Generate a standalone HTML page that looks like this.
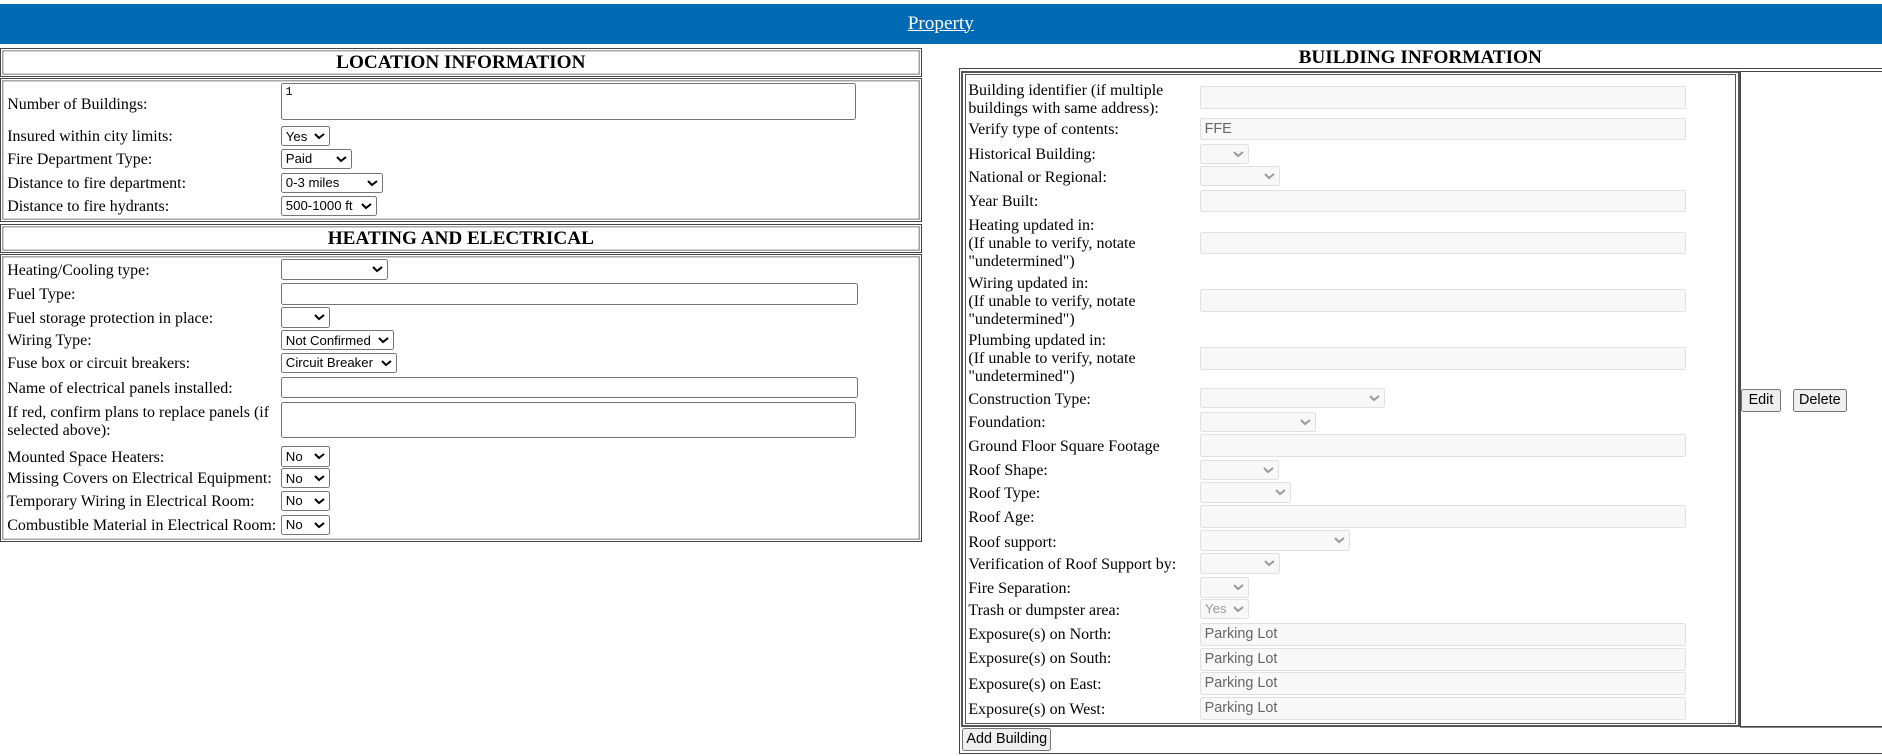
<!DOCTYPE html>
<html><head><meta charset="utf-8">
<style>
html,body{margin:0;padding:0;background:#fff;overflow:hidden}
body{zoom:1.2;width:1568px;height:630px;position:relative;font-family:"Liberation Serif",serif;font-size:13.33px;color:#000}
.a{position:absolute}
.bar{left:0;top:3px;width:1568px;height:34px;background:#0069b4;text-align:center;line-height:34px;font-size:16px}
.bar a{color:#fff;text-decoration:underline}
.box{position:absolute;border:1px solid #444;box-shadow:inset 0 0 0 1px #fff,inset 0 0 0 2px #888;box-sizing:border-box}
.h{font-weight:bold;font-size:16px;text-align:center}
.lb{position:absolute;line-height:15px;margin-top:1px}
select{position:absolute;height:17px;font-family:"Liberation Sans",sans-serif;font-size:11px;border:1px solid #767676;border-radius:2px;background:#fff;padding:0;color:#000;box-sizing:border-box}
select.d{border-color:#e0e0e0;color:#999;background:#f8f8f8}
.in{position:absolute;border:1px solid #767676;border-radius:2px;box-sizing:border-box;height:18px;font-family:"Liberation Sans",sans-serif;font-size:12px;padding-left:3px;line-height:16px}
.di{position:absolute;border:1px solid #e0e0e0;background:#f8f8f8;border-radius:2px;box-sizing:border-box;height:19px;font-family:"Liberation Sans",sans-serif;font-size:12px;padding-left:3px;line-height:17px;color:#666;left:1000px;width:405px}
.btn{position:absolute;border:1px solid #767676;background:#efefef;border-radius:2px;font-family:"Liberation Sans",sans-serif;font-size:12px;text-align:center;line-height:17px;height:19px;box-sizing:border-box}
</style></head><body>
<div class="a bar"><a>Property</a></div>

<!-- LEFT -->
<div class="box" style="left:0;top:40px;width:768px;height:24px"></div>
<div class="a h" style="left:0;top:43px;width:768px">LOCATION INFORMATION</div>
<div class="box" style="left:0;top:65px;width:768px;height:120px"></div>
<div class="lb" style="left:6px;top:79px">Number of Buildings:</div>
<div class="in" style="left:234px;top:69px;width:479px;height:31px;font-family:'Liberation Mono',monospace;font-size:10px;line-height:14px">1</div>
<div class="lb" style="left:6px;top:106px">Insured within city limits:</div><select style="left:234px;top:105px;width:41px"><option>Yes</option></select>
<div class="lb" style="left:6px;top:125px">Fire Department Type:</div><select style="left:234px;top:124px;width:59px"><option>Paid</option></select>
<div class="lb" style="left:6px;top:145px">Distance to fire department:</div><select style="left:234px;top:144px;width:85px"><option>0-3 miles</option></select>
<div class="lb" style="left:6px;top:164px">Distance to fire hydrants:</div><select style="left:234px;top:163px;width:80px"><option>500-1000 ft</option></select>

<div class="box" style="left:0;top:187px;width:768px;height:24px"></div>
<div class="a h" style="left:0;top:190px;width:768px">HEATING AND ELECTRICAL</div>
<div class="box" style="left:0;top:212px;width:768px;height:240px"></div>
<div class="lb" style="left:6px;top:217px">Heating/Cooling type:</div><select style="left:234px;top:216px;width:89px"></select>
<div class="lb" style="left:6px;top:237px">Fuel Type:</div><div class="in" style="left:234px;top:236px;width:481px"></div>
<div class="lb" style="left:6px;top:257px">Fuel storage protection in place:</div><select style="left:234px;top:256px;width:41px"></select>
<div class="lb" style="left:6px;top:276px">Wiring Type:</div><select style="left:234px;top:275px;width:94px"><option>Not Confirmed</option></select>
<div class="lb" style="left:6px;top:295px">Fuse box or circuit breakers:</div><select style="left:234px;top:294px;width:97px"><option>Circuit Breaker</option></select>
<div class="lb" style="left:6px;top:316px">Name of electrical panels installed:</div><div class="in" style="left:234px;top:314px;width:481px"></div>
<div class="lb" style="left:6px;top:336px;width:225px">If red, confirm plans to replace panels (if selected above):</div><div class="in" style="left:234px;top:335px;width:479px;height:30px"></div>
<div class="lb" style="left:6px;top:373px">Mounted Space Heaters:</div><select style="left:234px;top:372px;width:41px"><option>No</option></select>
<div class="lb" style="left:6px;top:391px">Missing Covers on Electrical Equipment:</div><select style="left:234px;top:390px;width:41px"><option>No</option></select>
<div class="lb" style="left:6px;top:410px">Temporary Wiring in Electrical Room:</div><select style="left:234px;top:409px;width:41px"><option>No</option></select>
<div class="lb" style="left:6px;top:430px">Combustible Material in Electrical Room:</div><select style="left:234px;top:429px;width:41px"><option>No</option></select>

<!-- RIGHT -->
<div class="a h" style="left:799px;top:39px;width:769px">BUILDING INFORMATION</div>
<div class="a" style="left:799px;top:57px;width:769px;height:571px;border:1px solid #444;border-right:none;box-sizing:border-box"></div>
<div class="a" style="left:801px;top:59px;width:649px;height:547px;border:2px solid #555;box-sizing:border-box"></div>
<div class="a" style="left:804px;top:62px;width:643px;height:541px;border:1px solid #555;box-sizing:border-box"></div>
<div class="a" style="left:1450px;top:59px;width:118px;height:547px;border:1px solid #444;border-right:none;box-sizing:border-box"></div>
<div class="a" style="left:1450px;top:606px;width:118px;height:1px;background:#888"></div>

<div class="lb" style="left:807px;top:67px;width:185px">Building identifier (if multiple buildings with same address):</div><div class="di" style="top:72px"></div>
<div class="lb" style="left:807px;top:100px">Verify type of contents:</div><div class="di" style="top:98px">FFE</div>
<div class="lb" style="left:807px;top:121px">Historical Building:</div><select class="d" style="left:1000px;top:120px;width:41px"></select>
<div class="lb" style="left:807px;top:140px">National or Regional:</div><select class="d" style="left:1000px;top:138px;width:67px"></select>
<div class="lb" style="left:807px;top:160px">Year Built:</div><div class="di" style="top:158px"></div>
<div class="lb" style="left:807px;top:180px">Heating updated in:<br>(If unable to verify, notate<br>"undetermined")</div><div class="di" style="top:193px"></div>
<div class="lb" style="left:807px;top:228px">Wiring updated in:<br>(If unable to verify, notate<br>"undetermined")</div><div class="di" style="top:241px"></div>
<div class="lb" style="left:807px;top:276px">Plumbing updated in:<br>(If unable to verify, notate<br>"undetermined")</div><div class="di" style="top:289px"></div>
<div class="lb" style="left:807px;top:325px">Construction Type:</div><select class="d" style="left:1000px;top:323px;width:154px"></select>
<div class="lb" style="left:807px;top:344px">Foundation:</div><select class="d" style="left:1000px;top:343px;width:97px"></select>
<div class="lb" style="left:807px;top:364px">Ground Floor Square Footage</div><div class="di" style="top:362px"></div>
<div class="lb" style="left:807px;top:384px">Roof Shape:</div><select class="d" style="left:1000px;top:383px;width:66px"></select>
<div class="lb" style="left:807px;top:403px">Roof Type:</div><select class="d" style="left:1000px;top:402px;width:76px"></select>
<div class="lb" style="left:807px;top:423px">Roof Age:</div><div class="di" style="top:421px"></div>
<div class="lb" style="left:807px;top:444px">Roof support:</div><select class="d" style="left:1000px;top:442px;width:125px"></select>
<div class="lb" style="left:807px;top:462px">Verification of Roof Support by:</div><select class="d" style="left:1000px;top:461px;width:67px"></select>
<div class="lb" style="left:807px;top:482px">Fire Separation:</div><select class="d" style="left:1000px;top:481px;width:41px"></select>
<div class="lb" style="left:807px;top:501px">Trash or dumpster area:</div><select class="d" style="left:1000px;top:499px;width:41px"><option>Yes</option></select>
<div class="lb" style="left:807px;top:521px">Exposure(s) on North:</div><div class="di" style="top:519px">Parking Lot</div>
<div class="lb" style="left:807px;top:541px">Exposure(s) on South:</div><div class="di" style="top:540px">Parking Lot</div>
<div class="lb" style="left:807px;top:562px">Exposure(s) on East:</div><div class="di" style="top:560px">Parking Lot</div>
<div class="lb" style="left:807px;top:583px">Exposure(s) on West:</div><div class="di" style="top:581px">Parking Lot</div>

<div class="btn" style="left:1451px;top:324px;width:33px">Edit</div>
<div class="btn" style="left:1494px;top:324px;width:45px">Delete</div>
<div class="btn" style="left:802px;top:607px;width:74px;height:19px">Add Building</div>
</body></html>
